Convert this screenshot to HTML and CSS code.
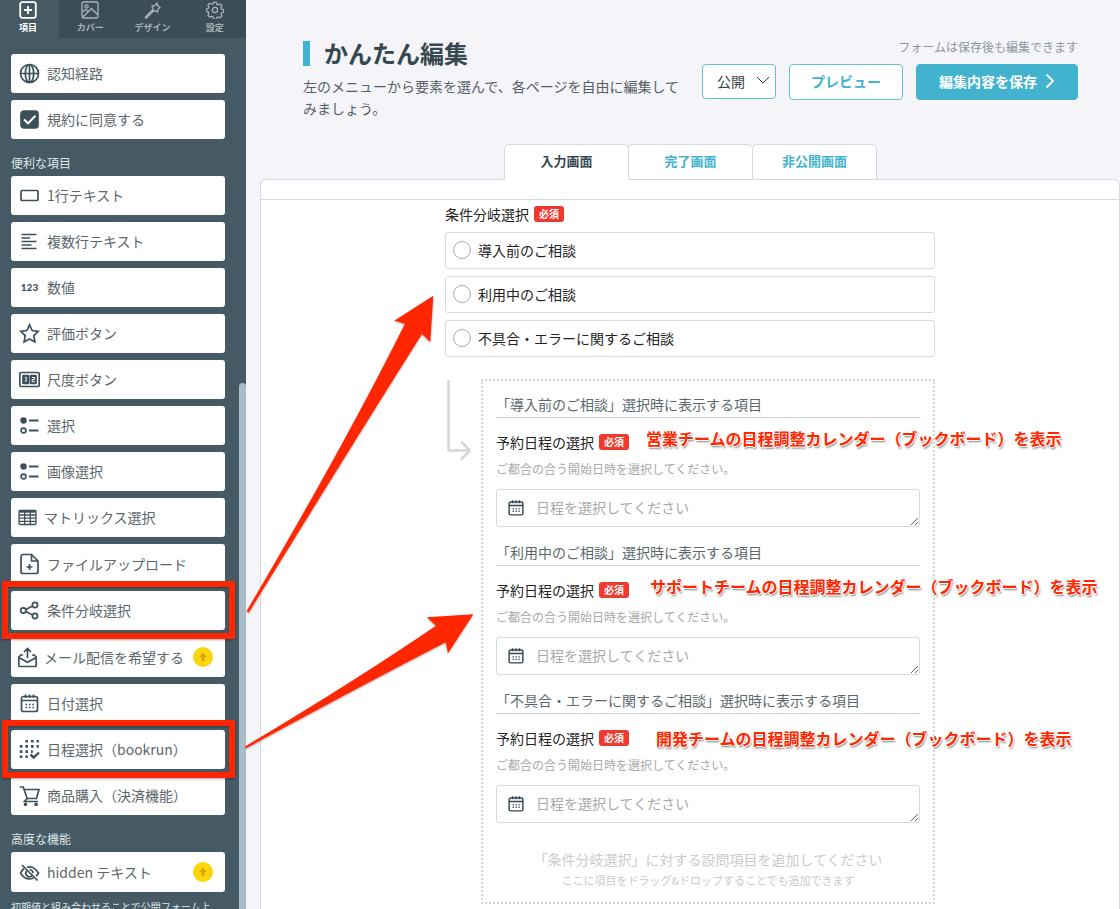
FILE: index.html
```html
<!DOCTYPE html>
<html lang="ja">
<head>
<meta charset="utf-8">
<meta name="viewport" content="width=device-width, initial-scale=1">
<title>かんたん編集</title>
<link rel="stylesheet" href="styles.css">
</head>
<body>
<div class="app">
  <aside class="sidebar">
    <nav class="modes" aria-label="編集メニュー">
      <button class="mode mode--active" type="button">
        <svg class="mode-icon" viewBox="0 0 18 18"><rect x="1.2" y="1.2" width="15.6" height="15.6" rx="2"/><path d="M9 5v8M5 9h8"/></svg>
        項目
      </button>
      <button class="mode" type="button">
        <svg class="mode-icon" viewBox="0 0 18 18"><rect x="1" y="1" width="16" height="16" rx="1.5"/><circle cx="5.6" cy="5.4" r="1.6"/><path d="M1.500 16.500l9-9 6.500 6.500M1.500 11l3-2.500 2.500 2"/></svg>
        カバー
      </button>
      <button class="mode" type="button">
        <svg class="mode-icon" viewBox="0 0 18 18"><path d="M9 5l3-.5L14 2l1 3 2 1.500-2 1.500-.5 3-2.500-1.500-3 .5.800-2.500zM10 8.500L2 16.500M11 9.500L3 17.300M2 16.500l1 .8"/></svg>
        デザイン
      </button>
      <button class="mode" type="button">
        <svg class="mode-icon" viewBox="0 0 18 18"><circle cx="9" cy="9" r="2.600"/><path d="M7.500 1h3l.5 2 1.500.7 1.900-1 2 2-1 1.900.6 1.400 2 .6v2.800l-2 .5-.6 1.500 1 1.900-2 2-1.900-1-1.500.7-.5 1.700h-3L7 16.300l-1.500-.7-1.900 1-2-2 1-1.900-.6-1.500-1.700-.5V7.900L2 7.300l.6-1.400-1-1.900 2-2 1.900 1L7 3z" transform="translate(.4 .4) scale(.95)"/></svg>
        設定
      </button>
    </nav>
    <div class="palette">
      <ul class="items">
        <li><button class="item" type="button">
          <svg class="icon" viewBox="0 0 21 21"><circle cx="10.500" cy="10.500" r="9"/><ellipse cx="10.500" cy="10.500" rx="4.200" ry="9"/><path d="M1.500 10.500h18M10.500 1.500v18"/></svg>認知経路</button></li>
        <li><button class="item" type="button">
          <svg class="icon" viewBox="0 0 21 21"><rect class="solid" x="2" y="2" width="17" height="17" rx="3"/><path class="tick" d="M5 10.500l4 3.800 7.500-7.500"/></svg>規約に同意する</button></li>
      </ul>
      <h2 class="group-name">便利な項目</h2>
      <ul class="items">
        <li><button class="item" type="button">
          <svg class="icon" viewBox="0 0 21 21"><rect x="2" y="5.500" width="17" height="10" rx="1"/></svg>1行テキスト</button></li>
        <li><button class="item" type="button">
          <svg class="icon" viewBox="0 0 21 21"><path d="M2.500 3.500h15M2.500 7h8.500M2.500 10.500h15M2.500 14h10M2.500 17.500h15"/></svg>複数行テキスト</button></li>
        <li><button class="item" type="button">
          <span class="icon digits" aria-hidden="true">123</span>数値</button></li>
        <li><button class="item" type="button">
          <svg class="icon" viewBox="0 0 21 21"><path d="M10.500 1.800l2.700 5.700 6.100.8-4.500 4.300 1.100 6.300-5.400-3-5.400 3 1.100-6.300L1.700 8.300l6.100-.8z"/></svg>評価ボタン</button></li>
        <li><button class="item" type="button">
          <svg class="icon" viewBox="0 0 21 21"><rect x=".8" y="3.500" width="19.400" height="14" rx="1.500"/><rect class="solid" x="4" y="6.500" width="5.500" height="8" rx=".5"/><rect class="solid" x="11.500" y="6.500" width="5.500" height="8" rx=".5"/><path class="fine" d="M6 8.500l1-.5v5M13 8.500h2.500v2H13.200v2.200h2.500"/></svg>尺度ボタン</button></li>
        <li><button class="item" type="button">
          <svg class="icon" viewBox="0 0 21 21"><circle class="solid" cx="4.500" cy="5.500" r="2.400"/><circle cx="4.500" cy="15.500" r="2.400"/><path class="bar" d="M10 5.500h9.500M10 15.500h9.500"/></svg>選択</button></li>
        <li><button class="item" type="button">
          <svg class="icon" viewBox="0 0 21 21"><circle class="solid" cx="4.500" cy="5.500" r="2.400"/><circle cx="4.500" cy="15.500" r="2.400"/><path class="bar" d="M10 5.500h9.500M10 15.500h9.500"/></svg>画像選択</button></li>
        <li><button class="item item--near" type="button">
          <svg class="icon" viewBox="0 0 21 21"><path class="thin" d="M3 3.500h15a1 1 0 0 1 1 1v12a1 1 0 0 1-1 1H3a1 1 0 0 1-1-1v-12a1 1 0 0 1 1-1zM2 8h17M2 11.200h17M2 14.400h17M7.700 4v13.500M13.300 4v13.500"/><path class="bold" d="M2.500 4.500h16"/></svg>マトリックス選択</button></li>
        <li><button class="item" type="button">
          <svg class="icon icon--tall" viewBox="0 0 21 22"><path d="M12.500 1.500H4a2 2 0 0 0-2 2v15a2 2 0 0 0 2 2h13a2 2 0 0 0 2-2V8zM12.500 1.500V8H19M10.500 11v6M7.500 14h6"/></svg>ファイルアップロード</button></li>
        <li><button class="item item--marked" type="button">
          <svg class="icon" viewBox="0 0 21 21"><circle cx="4.300" cy="10.500" r="2.600"/><circle cx="16" cy="5" r="2.600"/><circle cx="16" cy="16" r="2.600"/><path d="M6.700 9.400l7-3.300M6.700 11.600l7 3.300"/></svg>条件分岐選択</button></li>
        <li><button class="item item--near" type="button">
          <svg class="icon" viewBox="0 0 21 21"><path d="M6 8H3.800L1.800 10v8.500a1 1 0 0 0 1 1h15.400a1 1 0 0 0 1-1V10l-2-2H15M1.800 10.500l8.700 4.800 8.700-4.800M10.500 11V2M7 5l3.500-3.500L14 5"/></svg>メール配信を希望する
          <svg class="upgrade" viewBox="0 0 22 22" role="img" aria-label="アップグレード"><circle cx="11" cy="11" r="10"/><path d="M11 6.500l4 4.500H12.500v4h-3V11h-2.500z"/></svg></button></li>
        <li><button class="item" type="button">
          <svg class="icon" viewBox="0 0 21 21"><path d="M4.500 3.500h12a2 2 0 0 1 2 2v11a2 2 0 0 1-2 2h-12a2 2 0 0 1-2-2v-11a2 2 0 0 1 2-2zM2.500 7.500h16M6.500 1.500v3.500M10.500 1.500v3.500M14.500 1.500v3.500"/><path class="dots" d="M6.500 11.500h9M6.500 14.500h9"/></svg>日付選択</button></li>
        <li><button class="item item--marked" type="button">
          <svg class="icon" viewBox="0 0 21 21"><path class="grid-dots" d="M6.400 2.200h13.500M.8 7.400h19M.8 12.600h13M.8 17.800h8"/><path class="bold" d="M11.500 15.500l3.200 3 5.300-5"/></svg>日程選択（bookrun）</button></li>
        <li><button class="item" type="button">
          <svg class="icon" viewBox="0 0 21 21"><path d="M.8 2h3.400l4 11.500h9.300L20 4.500H5M8.200 13.500L5.500 16.500h13.500"/><circle class="solid" cx="6.500" cy="19.300" r="1"/><circle class="solid" cx="17" cy="19.300" r="1"/></svg>商品購入（決済機能）</button></li>
      </ul>
      <h2 class="group-name">高度な機能</h2>
      <ul class="items">
        <li><button class="item" type="button">
          <svg class="icon" viewBox="0 0 21 21"><path d="M5 6.500C3.500 7.800 2.200 9.500 1.500 11c2 3.500 5.500 6 9 6 1.500 0 2.800-.3 4-1M8 5.300c4.500-1.300 9 1.500 11.500 5.700-.7 1.200-1.500 2.300-2.500 3.200M7.500 9a3.600 3.600 0 0 0 5.300 4.800M10.500 7.500a3.600 3.600 0 0 1 3.500 3.800M3 3l15.500 15.500"/></svg>hidden テキスト
          <svg class="upgrade" viewBox="0 0 22 22" role="img" aria-label="アップグレード"><circle cx="11" cy="11" r="10"/><path d="M11 6.500l4 4.500H12.500v4h-3V11h-2.500z"/></svg></button></li>
      </ul>
      <p class="palette-note">初期値と組み合わせることで公開フォーム上</p>
    </div>
    <div class="scroll-thumb"></div>
  </aside>

  <main class="main">
    <header class="header">
      <div class="intro">
        <h1 class="title">かんたん編集</h1>
        <p class="lead">左のメニューから要素を選んで、各ページを自由に編集してみましょう。</p>
      </div>
      <div class="controls">
        <p class="save-note">フォームは保存後も編集できます</p>
        <div class="buttons">
          <div class="status">
            <select class="status-select" aria-label="公開状態"><option>公開</option><option>非公開</option></select>
            <svg class="status-arrow" viewBox="0 0 14 8"><path d="M1 1l6 6 6-6"/></svg>
          </div>
          <button class="btn" type="button">プレビュー</button>
          <button class="btn btn--primary" type="button">編集内容を保存
            <svg class="btn-arrow" viewBox="0 0 10 16"><path d="M1.500 1.500L8 8l-6.500 6.500"/></svg></button>
        </div>
      </div>
    </header>

    <nav class="tabs" aria-label="画面">
      <a class="tab tab--active" href="#input">入力画面</a>
      <a class="tab" href="#done">完了画面</a>
      <a class="tab" href="#closed">非公開画面</a>
    </nav>

    <section class="panel" id="input">
      <form class="form">
        <fieldset class="question">
          <legend class="label-row">条件分岐選択<span class="required">必須</span></legend>
          <label class="option"><input class="radio" type="radio" name="branch">導入前のご相談</label>
          <label class="option"><input class="radio" type="radio" name="branch">利用中のご相談</label>
          <label class="option"><input class="radio" type="radio" name="branch">不具合・エラーに関するご相談</label>
        </fieldset>

        <div class="branch">
          <svg class="branch-arrow" viewBox="0 0 26 82"><path d="M3.500 1v70.500H24M16 62.500l9 9-9 9"/></svg>
          <div class="branch-box">
            <section class="case">
              <h3 class="case-title">「導入前のご相談」選択時に表示する項目</h3>
              <div class="label-row"><label for="date-1">予約日程の選択</label><span class="required">必須</span><strong class="callout callout--a">営業チームの日程調整カレンダー（ブックボード）を表示</strong></div>
              <p class="help">ご都合の合う開始日時を選択してください。</p>
              <div class="field">
                <svg class="field-icon" viewBox="0 0 21 21"><path d="M4.500 3.500h12a2 2 0 0 1 2 2v11a2 2 0 0 1-2 2h-12a2 2 0 0 1-2-2v-11a2 2 0 0 1 2-2zM2.500 7.500h16M6.500 1.500v3.500M10.500 1.500v3.500M14.500 1.500v3.500"/><path class="dots" d="M6.500 11.500h9M6.500 14.500h9"/></svg>
                <textarea class="input" id="date-1" rows="1" placeholder="日程を選択してください"></textarea>
              </div>
            </section>
            <section class="case">
              <h3 class="case-title">「利用中のご相談」選択時に表示する項目</h3>
              <div class="label-row"><label for="date-2">予約日程の選択</label><span class="required">必須</span><strong class="callout callout--b">サポートチームの日程調整カレンダー（ブックボード）を表示</strong></div>
              <p class="help">ご都合の合う開始日時を選択してください。</p>
              <div class="field">
                <svg class="field-icon" viewBox="0 0 21 21"><path d="M4.500 3.500h12a2 2 0 0 1 2 2v11a2 2 0 0 1-2 2h-12a2 2 0 0 1-2-2v-11a2 2 0 0 1 2-2zM2.500 7.500h16M6.500 1.500v3.500M10.500 1.500v3.500M14.500 1.500v3.500"/><path class="dots" d="M6.500 11.500h9M6.500 14.500h9"/></svg>
                <textarea class="input" id="date-2" rows="1" placeholder="日程を選択してください"></textarea>
              </div>
            </section>
            <section class="case">
              <h3 class="case-title">「不具合・エラーに関するご相談」選択時に表示する項目</h3>
              <div class="label-row"><label for="date-3">予約日程の選択</label><span class="required">必須</span><strong class="callout callout--c">開発チームの日程調整カレンダー（ブックボード）を表示</strong></div>
              <p class="help">ご都合の合う開始日時を選択してください。</p>
              <div class="field">
                <svg class="field-icon" viewBox="0 0 21 21"><path d="M4.500 3.500h12a2 2 0 0 1 2 2v11a2 2 0 0 1-2 2h-12a2 2 0 0 1-2-2v-11a2 2 0 0 1 2-2zM2.500 7.500h16M6.500 1.500v3.500M10.500 1.500v3.500M14.500 1.500v3.500"/><path class="dots" d="M6.500 11.500h9M6.500 14.500h9"/></svg>
                <textarea class="input" id="date-3" rows="1" placeholder="日程を選択してください"></textarea>
              </div>
            </section>
            <div class="drop-hint">
              <p class="drop-title">「条件分岐選択」に対する設問項目を追加してください</p>
              <p class="drop-text">ここに項目をドラッグ&amp;ドロップすることでも追加できます</p>
            </div>
          </div>
        </div>
      </form>
    </section>
  </main>

  <svg class="pointers" viewBox="240 290 240 462" aria-hidden="true">
    <path d="M433.300 295.700L394.300 320.700 405 323.700Q344 446 246.700 611L248.700 612.700Q352 445 422 334L430.300 342z"/>
    <path d="M473.300 614.300L427 617.300 436 625.700Q355 681 244.700 746.700L246 748.300Q355 689 445.700 642.300L448 653.300z"/>
  </svg>
</div>
</body>
</html>
```

FILE: styles.css
```css
* {
  box-sizing: border-box;
}

body,
h1,
h2,
h3,
p,
ul,
fieldset {
  margin: 0;
  padding: 0;
}

body {
  font-family: "Noto Sans CJK JP", "Noto Sans", sans-serif;
  font-size: 14px;
  line-height: 22px;
  color: #222;
  background: #f4f4f9;
}

button,
select,
textarea {
  font: inherit;
  margin: 0;
}

svg {
  display: block;
  flex: none;
  fill: none;
  stroke: currentColor;
}

.app {
  position: relative;
  display: flex;
  height: 100vh;
  overflow: hidden;
}

/* Sidebar */

.sidebar {
  position: relative;
  flex: none;
  width: 246px;
  overflow: hidden;
  background: #455a64;
}

.modes {
  display: grid;
  grid-template-columns: 59px 1fr 1fr 1fr;
  height: 38px;
}

.mode {
  display: flex;
  flex-direction: column;
  align-items: center;
  gap: 3px;
  padding: 1px 0 0;
  border: 0;
  background: #3b4d57;
  color: #a9b4ba;
  font-size: 9px;
  font-weight: 700;
  line-height: 12px;
}

.mode--active {
  padding-right: 3px;
  background: #455a64;
  color: #fff;
}

.mode-icon {
  width: 18px;
  height: 18px;
  stroke-width: 1.3;
}

.mode--active .mode-icon {
  stroke-width: 1.8;
}

.palette {
  padding: 16px 21px 0 11px;
}

.items {
  display: flex;
  flex-direction: column;
  gap: 7px;
  list-style: none;
}

.item {
  position: relative;
  display: flex;
  align-items: center;
  gap: 7px;
  width: 100%;
  padding: 9px 11px 9px 8px;
  border: 0;
  border-radius: 3px;
  background: #fff;
  color: #5c676c;
  line-height: 21px;
  text-align: left;
  white-space: nowrap;
}

.item--near {
  gap: 6px;
  padding-left: 6px;
}

.icon {
  width: 21px;
  height: 21px;
  color: #3d5059;
  stroke-width: 1.7;
}

.icon--tall {
  height: 22px;
}

.digits {
  font-family: Lato, sans-serif;
  font-size: 10px;
  font-weight: 900;
  text-align: center;
}

.solid {
  fill: currentColor;
}

.tick {
  stroke: #fff;
  stroke-width: 2;
}

.fine {
  stroke: #fff;
  stroke-width: 1;
}

.thin {
  stroke-width: 1.3;
}

.bar {
  stroke-width: 2;
}

.bold {
  stroke-width: 2.4;
}

.dots {
  stroke-width: 1.6;
  stroke-dasharray: 1.6 1.8;
}

.grid-dots {
  stroke-width: 2.6;
  stroke-dasharray: 2.6 3;
}

.upgrade {
  width: 22px;
  height: 22px;
  margin-left: auto;
  stroke: none;
}

.upgrade circle {
  fill: #fdd50b;
}

.upgrade path {
  fill: #d9a514;
}

.item--marked::after {
  content: "";
  position: absolute;
  inset: -10px -10px -9px -9px;
  z-index: 1;
  border: 6px solid #ff2600;
  box-shadow: 0 1px 2px rgba(0, 0, 0, 0.35), inset 0 1px 2px rgba(0, 0, 0, 0.35);
}

.group-name {
  margin: 15px 0 5px;
  color: #dfe5e8;
  font-size: 12px;
  font-weight: 400;
  line-height: 17px;
}

.palette-note {
  margin-top: 6px;
  color: #dfe5e8;
  font-size: 10px;
  line-height: 18px;
  white-space: nowrap;
}

.scroll-thumb {
  position: absolute;
  top: 383px;
  right: 0;
  bottom: 0;
  width: 7px;
  border-radius: 4px 4px 0 0;
  background: #a9bdc8;
}

/* Main column */

.main {
  display: flex;
  flex: 1;
  flex-direction: column;
  min-width: 0;
}

.header {
  display: flex;
  gap: 14px;
  padding: 35px 42px 25px 57px;
}

.intro {
  flex: 1;
  min-width: 0;
}

.title {
  display: flex;
  align-items: center;
  gap: 14px;
  color: #37474f;
  font-size: 24px;
  font-weight: 700;
  line-height: 36px;
}

.title::before {
  content: "";
  width: 7px;
  height: 25px;
  background: #41b3cf;
}

.lead {
  margin-top: 4px;
  color: #565f66;
}

.controls {
  padding-top: 3px;
}

.save-note {
  color: #8f979e;
  font-size: 12px;
  line-height: 18px;
  text-align: right;
}

.buttons {
  display: flex;
  gap: 13px;
  margin-top: 8px;
}

.status {
  position: relative;
}

.status-select {
  width: 74px;
  height: 35px;
  padding: 0 14px 2px;
  appearance: none;
  border: 1px solid #62c5cb;
  border-radius: 4px;
  background: #fff;
  color: #444;
}

.status-arrow {
  position: absolute;
  top: 12px;
  right: 6px;
  width: 14px;
  height: 8px;
  color: #333;
  pointer-events: none;
}

.btn {
  display: flex;
  align-items: center;
  gap: 8px;
  height: 36px;
  padding: 0 21px 2px;
  border: 1px solid #62c5cb;
  border-radius: 4px;
  background: #fff;
  color: #41b3cf;
  font-weight: 700;
  white-space: nowrap;
}

.btn--primary {
  padding: 0 22px 2px;
  border-color: #41b3cf;
  background: #41b3cf;
  color: #fff;
}

.btn-arrow {
  width: 10px;
  height: 16px;
  stroke-width: 1.8;
}

.tabs {
  position: relative;
  display: flex;
  justify-content: center;
  margin-left: 14px;
}

.tab {
  width: 125px;
  margin: 0 -1px -1px 0;
  padding: 5px 0 7px;
  border: 1px solid #d5dadd;
  border-radius: 5px 5px 0 0;
  background: #fff;
  color: #41b3cf;
  font-size: 13px;
  font-weight: 700;
  text-align: center;
  text-decoration: none;
}

.tab--active {
  border-bottom-color: #fff;
  color: #37474f;
}

.panel {
  flex: 1 0 auto;
  margin-left: 14px;
  padding-top: 19px;
  border: 1px solid #d5dadd;
  border-radius: 6px 6px 0 0;
  background: #fff;
}

.form {
  padding: 3px 20px 20px;
  border-top: 1px solid #d5dadd;
}

.question,
.branch {
  max-width: 490px;
  margin: 0 auto;
}

.question {
  border: 0;
}

.label-row {
  position: relative;
  display: flex;
  align-items: center;
  gap: 5px;
  padding: 0;
}

.required {
  padding: 0 5px;
  border-radius: 3px;
  background: #f0392f;
  color: #fff;
  font-size: 10px;
  font-weight: 700;
  line-height: 16px;
}

.option {
  display: flex;
  align-items: center;
  gap: 7px;
  height: 37px;
  margin-top: 7px;
  padding: 0 7px 2px;
  border: 1px solid #d8dbdd;
  border-radius: 3px;
}

.radio {
  width: 18px;
  height: 18px;
  margin: 0;
  appearance: none;
  border: 1px solid #a8aaac;
  border-radius: 50%;
}

.radio:checked {
  border: 6px solid #41b3cf;
}

.branch {
  display: flex;
  align-items: flex-start;
  gap: 10px;
  margin-top: 22px;
}

.branch-arrow {
  width: 26px;
  height: 82px;
  color: #d3d7da;
  stroke-width: 2.5;
}

.branch-box {
  flex: 1;
  min-width: 0;
  padding: 12px 13px 13px;
  border: 2px dotted #d0d3d6;
}

.case {
  margin-bottom: 14px;
}

.case-title {
  padding-bottom: 2px;
  border-bottom: 1px solid #d0d3d6;
  color: #5c676c;
  font-size: 14px;
  font-weight: 400;
}

.case .label-row {
  margin-top: 13px;
}

.help {
  margin-top: 6px;
  color: #a8a8a8;
  font-size: 12px;
  line-height: 20px;
}

.field {
  position: relative;
  margin-top: 10px;
}

.field-icon {
  position: absolute;
  top: 10px;
  left: 11px;
  width: 18px;
  height: 18px;
  color: #37474f;
  stroke-width: 1.7;
}

.input {
  display: block;
  width: 100%;
  height: 38px;
  padding: 6px 12px 7px 39px;
  overflow: hidden;
  border: 1px solid #d8dbdd;
  border-radius: 3px;
  background: #fff;
  color: #222;
}

.input::placeholder {
  color: #a8a8a8;
}

.drop-hint {
  margin-top: 25px;
  color: #c8ccce;
  text-align: center;
}

.drop-text {
  padding-top: 1px;
  font-size: 11px;
  line-height: 18px;
}

/* Red annotations laid over the form */

.callout {
  position: absolute;
  bottom: 4px;
  left: 150px;
  color: #ff2600;
  font-size: 16px;
  font-weight: 700;
  white-space: nowrap;
  text-shadow: 1px 0 #fff, -1px 0 #fff, 0 1px #fff, 0 -1px #fff, 1px 2px 2px rgba(0, 0, 0, 0.5);
}

.callout--b {
  left: 154px;
}

.callout--c {
  bottom: 0;
  left: 160px;
}

.pointers {
  position: absolute;
  top: 290px;
  left: 240px;
  width: 240px;
  height: 462px;
  fill: #ff2600;
  stroke: none;
  filter: drop-shadow(0 1px 1px rgba(0, 0, 0, 0.35));
  pointer-events: none;
}
```
